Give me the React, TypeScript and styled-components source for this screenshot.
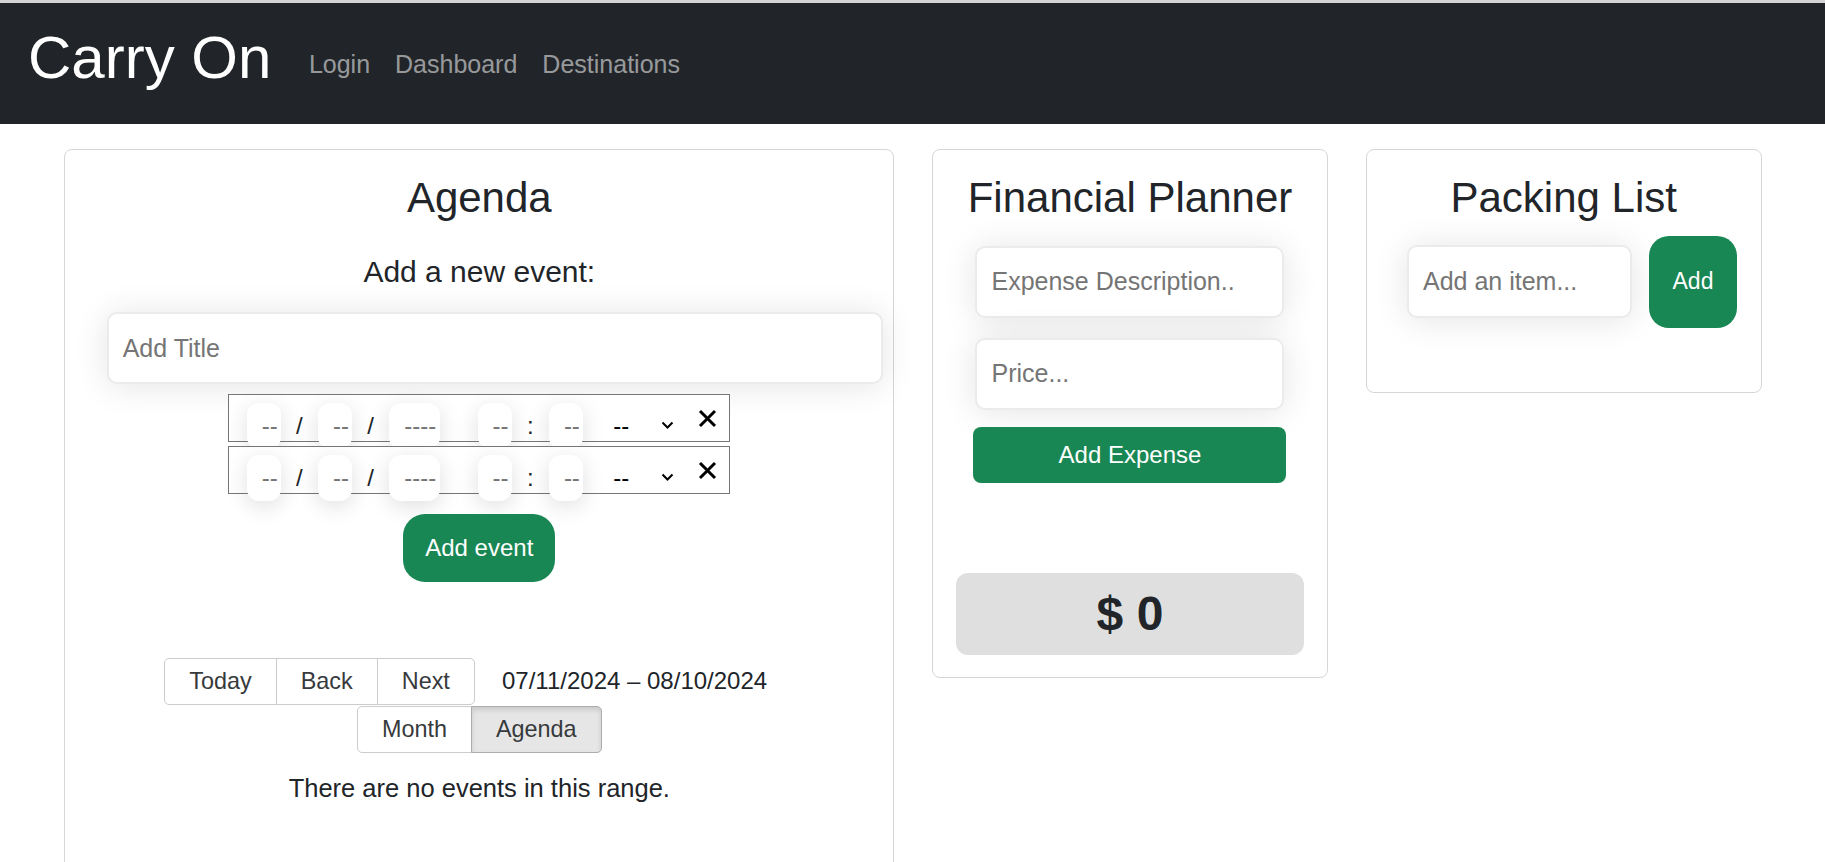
import styled, { createGlobalStyle } from 'styled-components';

const GlobalStyle = createGlobalStyle`
  html, body {
    margin: 0;
    padding: 0;
    overflow: hidden;
  }
  body {
    font-family: "Liberation Sans", Arial, sans-serif;
    color: #212529;
    background: #fff;
  }
  * {
    box-sizing: border-box;
  }
`;

const Navbar = styled.nav`
  display: flex;
  align-items: flex-start;
  height: 124px;
  padding: 19px 0 0 28px;
  background: #212529;
  border-top: 3px solid #d4d4d4;
`;

const Brand = styled.a`
  margin-right: 25px;
  font-size: 60px;
  line-height: 1.2;
  color: #fff;
  text-decoration: none;
`;

const NavLink = styled.a`
  margin-top: 27.3px;
  padding: 0 12.5px;
  font-size: 25px;
  line-height: 1.2;
  color: rgba(255, 255, 255, 0.55);
  text-decoration: none;
`;

const Main = styled.main`
  display: grid;
  grid-template-columns: 830px 396px 396px;
  column-gap: 37.7px;
  align-items: start;
  padding: 25.3px 0 0 64.3px;
`;

const Card = styled.section<{ $pb: number }>`
  display: flex;
  flex-direction: column;
  align-items: center;
  padding: 23px 0 ${(p) => p.$pb}px;
  border: 1px solid #d6d6d6;
  border-radius: 8px;
`;

const CardTitle = styled.h2`
  margin: 0;
  font-size: 42px;
  font-weight: 400;
  line-height: 1.2;
  color: #212529;
`;

const SubTitle = styled.h4`
  margin: 30.6px 0 0;
  font-size: 30px;
  font-weight: 400;
  line-height: 1.2;
`;

const TextInput = styled.input<{ $w: number; $h?: number; $mt?: number }>`
  width: ${(p) => p.$w}px;
  height: ${(p) => p.$h ?? 72}px;
  margin-top: ${(p) => p.$mt ?? 0}px;
  padding: 0 14px;
  border: 2px solid #ebebeb;
  border-radius: 10px;
  background: #fff;
  box-shadow: 0 2px 34px rgba(0, 0, 0, 0.11);
  font: 25px "Liberation Sans", Arial, sans-serif;
  color: #212529;
  outline: none;

  &::placeholder {
    color: #757575;
    opacity: 1;
  }
`;

const TitleInput = styled(TextInput)`
  align-self: flex-start;
  margin-left: 41.4px;
`;

const DateStack = styled.div`
  display: flex;
  flex-direction: column;
  gap: 4px;
  margin-top: 10px;
`;

const DateRow = styled.div`
  display: flex;
  align-items: flex-start;
  width: 502px;
  height: 48px;
  padding: 8px 0 0 17.4px;
  border: 1px solid #767676;
  background: #fff;
  font-size: 24px;
`;

const Segment = styled.span<{ $w: number }>`
  flex: none;
  width: ${(p) => p.$w}px;
  height: 46px;
  padding-left: 15px;
  border-radius: 12px;
  background: #fff;
  box-shadow: 0 5px 22px rgba(0, 0, 0, 0.13);
  line-height: 46px;
  color: #757575;
`;

const Sep = styled.span`
  flex: none;
  width: 37.3px;
  line-height: 46px;
  text-align: center;
  color: #212529;
`;

const AmPm = styled.span`
  margin-left: 30.3px;
  line-height: 46px;
  color: #000;
`;

const Chevron = styled.svg`
  flex: none;
  margin: 18px 0 0 31.7px;
`;

const Clear = styled.svg`
  flex: none;
  margin: 5.7px 0 0 24.3px;
`;

const GreenButton = styled.button`
  border: none;
  background: #198754;
  color: #fff;
  font: 24px "Liberation Sans", Arial, sans-serif;
  cursor: pointer;
`;

const AddEventButton = styled(GreenButton)`
  width: 152px;
  height: 68px;
  margin-top: 19.7px;
  border-radius: 22px;
`;

const AddExpenseButton = styled(GreenButton)`
  width: 313px;
  height: 56px;
  margin-top: 17px;
  border-radius: 8px;
`;

const AddItemButton = styled(GreenButton)`
  width: 88px;
  height: 92px;
  border-radius: 20px;
  font-size: 23px;
`;

const Calendar = styled.div`
  width: 630px;
  margin-top: 75.6px;
`;

const Toolbar = styled.div`
  display: flex;
  flex-wrap: wrap;
  justify-content: center;
  align-items: center;
  row-gap: 1px;
`;

const BtnGroup = styled.div`
  display: inline-flex;
`;

const ToolButton = styled.button<{ $active?: boolean }>`
  height: 47px;
  padding: 0 24px;
  border: 1px solid ${(p) => (p.$active ? '#adadad' : '#ccc')};
  border-radius: 0;
  background: ${(p) => (p.$active ? '#e6e6e6' : '#fff')};
  box-shadow: ${(p) => (p.$active ? 'inset 0 3px 5px rgba(0, 0, 0, 0.125)' : 'none')};
  font: 23.4px "Liberation Sans", Arial, sans-serif;
  color: #373a3c;
  cursor: pointer;

  & + & {
    margin-left: -1px;
  }
  &:first-child {
    border-radius: 5px 0 0 5px;
  }
  &:last-child {
    border-radius: 0 5px 5px 0;
  }
`;

const RangeLabel = styled.span`
  flex-grow: 1;
  padding: 0 10px;
  font-size: 24px;
  text-align: center;
`;

const EmptyText = styled.div`
  margin-top: 20.3px;
  font-size: 25.5px;
  line-height: 1.2;
  text-align: center;
`;

const TotalBox = styled.div`
  display: flex;
  align-items: center;
  justify-content: center;
  width: 348px;
  height: 82px;
  margin-top: 89.7px;
  border-radius: 12px;
  background: #dfdfdf;
  font-size: 48px;
  font-weight: 900;
  line-height: 1;
  color: #212529;
`;

const PackRow = styled.div`
  display: flex;
  align-items: center;
  gap: 17px;
  align-self: flex-start;
  margin: 12.3px 0 0 40.3px;
`;

function DateTimeField() {
  return (
    <DateRow>
      <Segment $w={34}>--</Segment>
      <Sep>/</Sep>
      <Segment $w={34}>--</Segment>
      <Sep>/</Sep>
      <Segment $w={51}>----</Segment>
      <Sep />
      <Segment $w={34}>--</Segment>
      <Sep>:</Sep>
      <Segment $w={34}>--</Segment>
      <AmPm>--</AmPm>
      <Chevron width="13" height="8" viewBox="0 0 13 8">
        <path d="M1.5 1.5 L6.5 6.5 L11.5 1.5" fill="none" stroke="#000" strokeWidth="2" />
      </Chevron>
      <Clear width="19" height="19" viewBox="0 0 19 19">
        <path d="M2 2 L17 17 M17 2 L2 17" fill="none" stroke="#000" strokeWidth="3" />
      </Clear>
    </DateRow>
  );
}

export default function App() {
  return (
    <>
      <GlobalStyle />
      <Navbar>
        <Brand href="#">Carry On</Brand>
        <NavLink href="#">Login</NavLink>
        <NavLink href="#">Dashboard</NavLink>
        <NavLink href="#">Destinations</NavLink>
      </Navbar>
      <Main>
        <Card $pb={80}>
          <CardTitle>Agenda</CardTitle>
          <SubTitle>Add a new event:</SubTitle>
          <TitleInput $w={776} $mt={22} placeholder="Add Title" />
          <DateStack>
            <DateTimeField />
            <DateTimeField />
          </DateStack>
          <AddEventButton>Add event</AddEventButton>
          <Calendar>
            <Toolbar>
              <BtnGroup>
                <ToolButton>Today</ToolButton>
                <ToolButton>Back</ToolButton>
                <ToolButton>Next</ToolButton>
              </BtnGroup>
              <RangeLabel>07/11/2024 – 08/10/2024</RangeLabel>
              <BtnGroup>
                <ToolButton>Month</ToolButton>
                <ToolButton $active>Agenda</ToolButton>
              </BtnGroup>
            </Toolbar>
            <EmptyText>There are no events in this range.</EmptyText>
          </Calendar>
        </Card>

        <Card $pb={22.3}>
          <CardTitle>Financial Planner</CardTitle>
          <TextInput $w={309} $mt={22.3} placeholder="Expense Description.." />
          <TextInput $w={309} $mt={20} placeholder="Price..." />
          <AddExpenseButton>Add Expense</AddExpenseButton>
          <TotalBox>$ 0</TotalBox>
        </Card>

        <Card $pb={64}>
          <CardTitle>Packing List</CardTitle>
          <PackRow>
            <TextInput $w={225} $h={73} placeholder="Add an item..." />
            <AddItemButton>Add</AddItemButton>
          </PackRow>
        </Card>
      </Main>
    </>
  );
}
